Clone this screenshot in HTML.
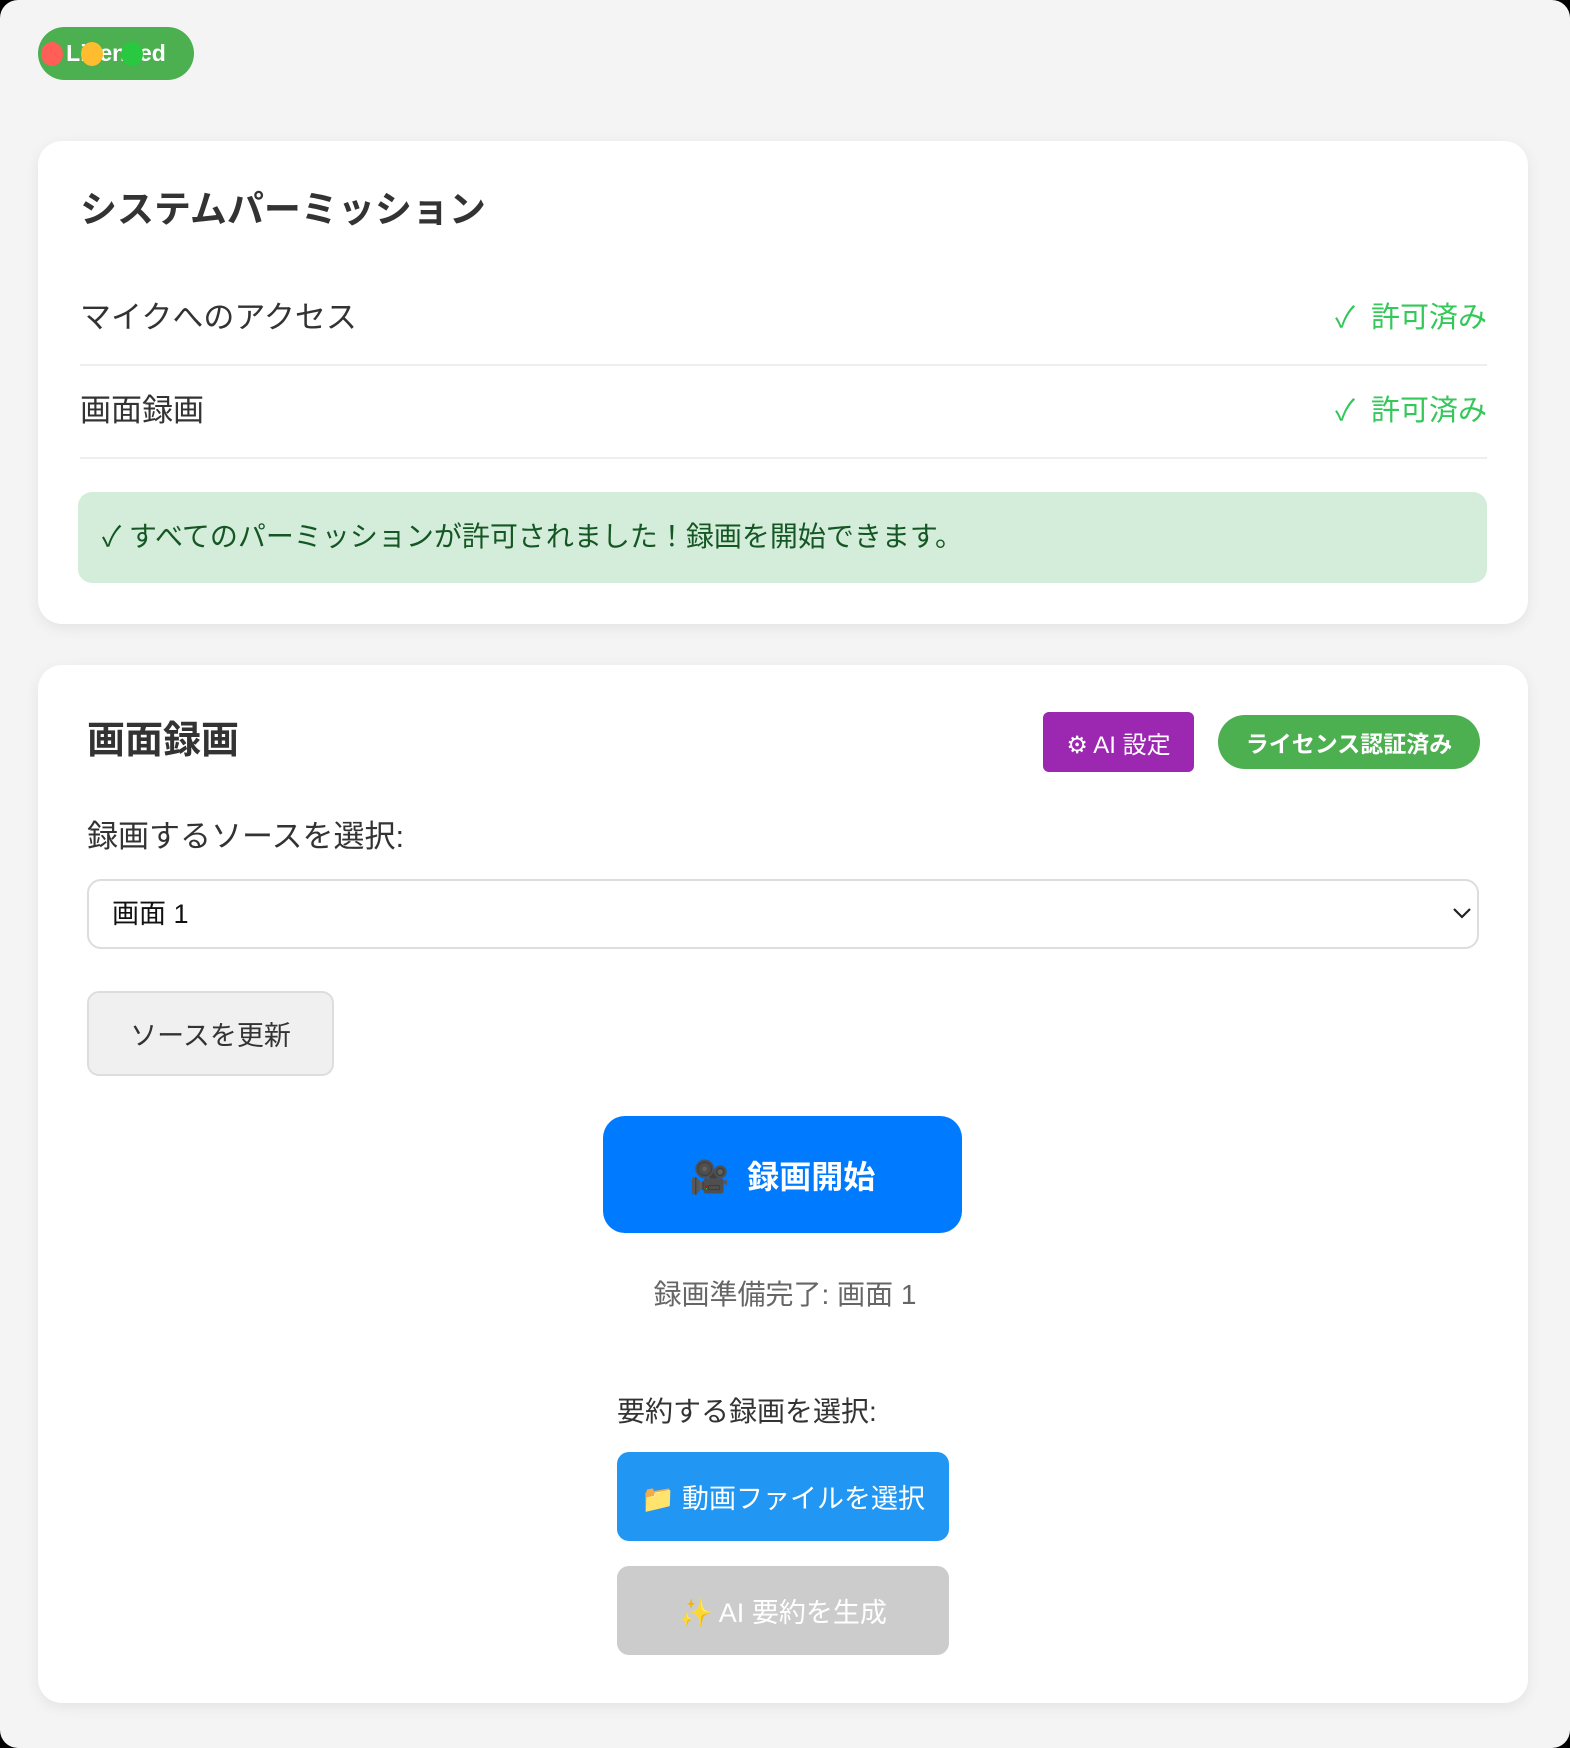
<!DOCTYPE html>
<html><head><meta charset="utf-8"><style>
*{margin:0;padding:0;box-sizing:border-box}
html,body{width:1570px;height:1748px;background:#000;overflow:hidden}
body{font-family:"Liberation Sans","Noto Sans CJK JP",sans-serif;color:#333}
#page{position:absolute;left:0;top:0;width:1570px;height:1748px;background:#f4f4f4;border-radius:18px}
.a{position:absolute;white-space:nowrap}
.card{position:absolute;left:38px;width:1490px;background:#fff;border-radius:24px;box-shadow:0 4px 14px rgba(0,0,0,0.07)}
.dot{position:absolute;width:22px;height:24px;border-radius:50%;top:42px}
.row{position:absolute;left:80px;width:1407px;height:2px;background:#eee}
.ok{color:#34c759;font-size:29px}
.btn{position:absolute;display:flex;align-items:center;justify-content:center;white-space:nowrap}
</style></head><body><div id="page">

<div class="btn" style="left:38px;top:27px;width:156px;height:53px;border-radius:27px;background:#4caf50;color:#fff;font-weight:bold;font-size:23px">Licensed</div>
<div class="dot" style="left:41px;background:#ff5f57"></div>
<div class="dot" style="left:81px;background:#febc2e"></div>
<div class="dot" style="left:121px;background:#28c840"></div>

<div class="card" style="top:141px;height:483px"></div>
<div class="a" style="left:80px;top:188px;font-size:37px;font-weight:bold;line-height:44px">システムパーミッション</div>
<div class="a" style="left:80px;top:298px;font-size:31px;line-height:40px">マイクへのアクセス</div>
<div class="a ok" style="right:83px;top:298px;line-height:40px">✓&nbsp; 許可済み</div>
<div class="row" style="top:364px"></div>
<div class="a" style="left:80px;top:391px;font-size:31px;line-height:40px">画面録画</div>
<div class="a ok" style="right:83px;top:391px;line-height:40px">✓&nbsp; 許可済み</div>
<div class="row" style="top:457px"></div>
<div class="a" style="left:78px;top:492px;width:1409px;height:91px;background:#d4edda;border-radius:14px"></div>
<div class="a" style="left:102px;top:518px;font-size:28px;line-height:38px;color:#155724">✓ すべてのパーミッションが許可されました！録画を開始できます。</div>

<div class="card" style="top:665px;height:1038px"></div>
<div class="a" style="left:87px;top:718px;font-size:38px;font-weight:bold;line-height:46px">画面録画</div>
<div class="btn" style="left:1043px;top:712px;width:151px;height:60px;background:#9c27b0;border-radius:6px;color:#fff;font-size:24px">⚙ AI 設定</div>
<div class="btn" style="left:1218px;top:715px;width:262px;height:54px;background:#4caf50;border-radius:27px;color:#fff;font-size:23px;font-weight:bold">ライセンス認証済み</div>
<div class="a" style="left:87px;top:817px;font-size:31px;line-height:40px">録画するソースを選択:</div>
<div class="a" style="left:87px;top:879px;width:1392px;height:70px;border:2px solid #ddd;border-radius:14px;background:#fff"></div>
<div class="a" style="left:112px;top:896px;font-size:27px;line-height:36px;color:#111">画面 1</div>
<svg class="a" style="left:1452px;top:906px" width="20" height="14" viewBox="0 0 20 14"><path d="M2 3 L10 11 L18 3" fill="none" stroke="#222" stroke-width="2.2"/></svg>
<div class="btn" style="left:87px;top:991px;width:247px;height:85px;background:#f0f0f0;border:2px solid #ddd;border-radius:12px;font-size:27px;color:#333">ソースを更新</div>
<div class="btn" style="left:603px;top:1116px;width:359px;height:117px;background:#007bff;border-radius:22px;color:#fff;font-size:32px;font-weight:bold">🎥&nbsp;&nbsp;録画開始</div>
<div class="a" style="left:0;width:1570px;text-align:center;top:1276px;font-size:28px;line-height:38px;color:#666">録画準備完了: 画面 1</div>
<div class="a" style="left:617px;top:1393px;font-size:28px;line-height:38px;color:#333">要約する録画を選択:</div>
<div class="btn" style="left:617px;top:1452px;width:332px;height:89px;background:#2196f3;border-radius:12px;color:#fff;font-size:27px">📁 動画ファイルを選択</div>
<div class="btn" style="left:617px;top:1566px;width:332px;height:89px;background:#ccc;border-radius:12px;color:#fff;font-size:27px">✨ AI 要約を生成</div>

</div></body></html>
